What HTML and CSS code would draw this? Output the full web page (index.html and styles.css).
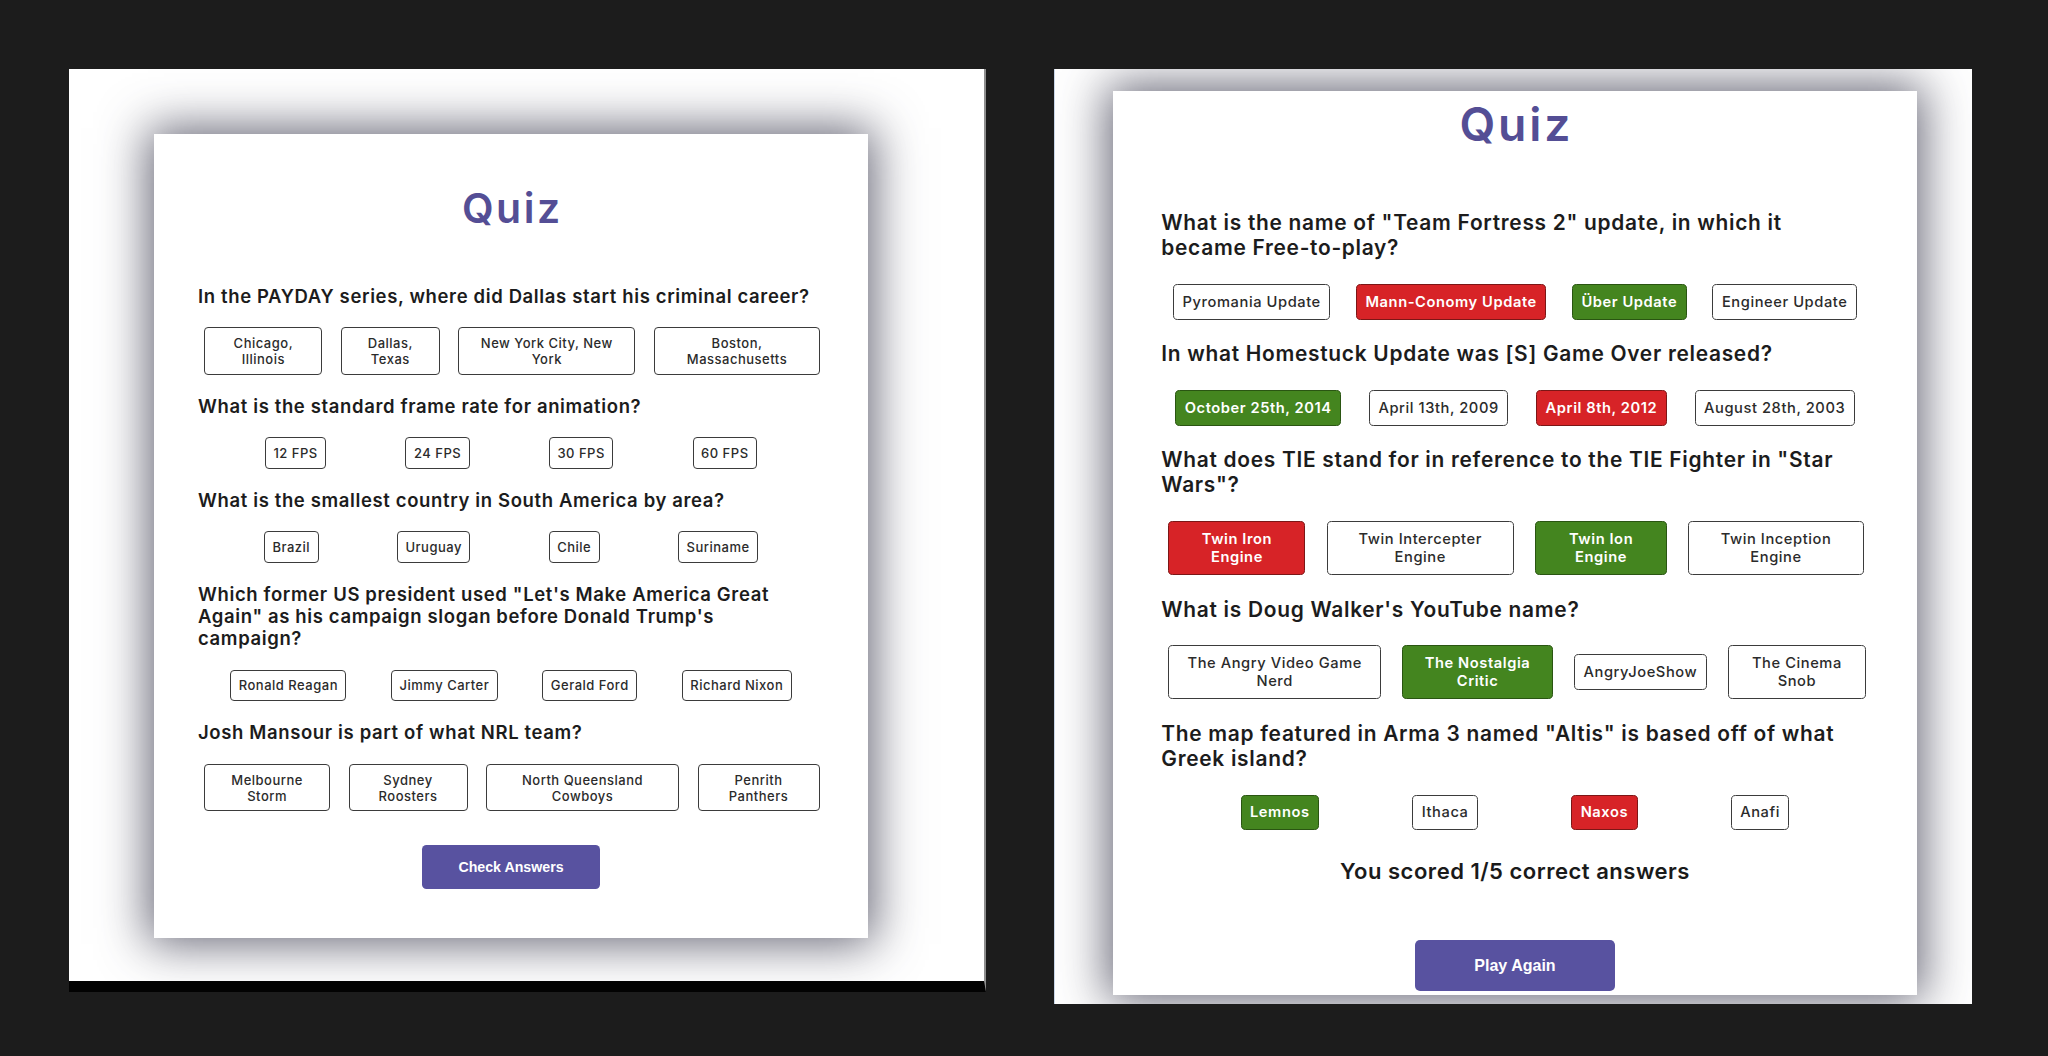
FILE: index.html
```html
<!DOCTYPE html>
<html lang="en">
<head>
<meta charset="utf-8">
<title>Quiz</title>
<link rel="stylesheet" href="styles.css">
</head>
<body>
<div class="stage">
  <section class="shot shot--left">
    <div class="quiz quiz--left">
      <h1 class="quiz__title">Quiz</h1>

      <div class="question">
        <h2 class="question__text">In the PAYDAY series, where did Dallas start his criminal career?</h2>
        <div class="answers answers--payday">
          <button class="answer">Chicago, Illinois</button>
          <button class="answer">Dallas, Texas</button>
          <button class="answer">New York City, New York</button>
          <button class="answer">Boston, Massachusetts</button>
        </div>
      </div>

      <div class="question">
        <h2 class="question__text">What is the standard frame rate for animation?</h2>
        <div class="answers">
          <button class="answer">12 FPS</button>
          <button class="answer">24 FPS</button>
          <button class="answer">30 FPS</button>
          <button class="answer">60 FPS</button>
        </div>
      </div>

      <div class="question">
        <h2 class="question__text">What is the smallest country in South America by area?</h2>
        <div class="answers">
          <button class="answer">Brazil</button>
          <button class="answer">Uruguay</button>
          <button class="answer">Chile</button>
          <button class="answer">Suriname</button>
        </div>
      </div>

      <div class="question">
        <h2 class="question__text">Which former US president used "Let's Make America Great Again" as his campaign slogan before Donald Trump's campaign?</h2>
        <div class="answers">
          <button class="answer">Ronald Reagan</button>
          <button class="answer">Jimmy Carter</button>
          <button class="answer">Gerald Ford</button>
          <button class="answer">Richard Nixon</button>
        </div>
      </div>

      <div class="question">
        <h2 class="question__text">Josh Mansour is part of what NRL team?</h2>
        <div class="answers answers--nrl">
          <button class="answer">Melbourne Storm</button>
          <button class="answer">Sydney Roosters</button>
          <button class="answer">North Queensland Cowboys</button>
          <button class="answer">Penrith Panthers</button>
        </div>
      </div>

      <button class="quiz__action">Check Answers</button>
    </div>
  </section>

  <section class="shot shot--right">
    <div class="quiz quiz--right">
      <h1 class="quiz__title">Quiz</h1>

      <div class="question">
        <h2 class="question__text">What is the name of "Team Fortress 2" update, in which it became Free-to-play?</h2>
        <div class="answers">
          <button class="answer">Pyromania Update</button>
          <button class="answer answer--wrong">Mann-Conomy Update</button>
          <button class="answer answer--correct">Über Update</button>
          <button class="answer">Engineer Update</button>
        </div>
      </div>

      <div class="question">
        <h2 class="question__text">In what Homestuck Update was [S] Game Over released?</h2>
        <div class="answers">
          <button class="answer answer--correct">October 25th, 2014</button>
          <button class="answer">April 13th, 2009</button>
          <button class="answer answer--wrong">April 8th, 2012</button>
          <button class="answer">August 28th, 2003</button>
        </div>
      </div>

      <div class="question">
        <h2 class="question__text">What does TIE stand for in reference to the TIE Fighter in "Star Wars"?</h2>
        <div class="answers answers--tie">
          <button class="answer answer--wrong">Twin Iron Engine</button>
          <button class="answer">Twin Intercepter Engine</button>
          <button class="answer answer--correct">Twin Ion Engine</button>
          <button class="answer">Twin Inception Engine</button>
        </div>
      </div>

      <div class="question">
        <h2 class="question__text">What is Doug Walker's YouTube name?</h2>
        <div class="answers answers--doug">
          <button class="answer">The Angry Video Game Nerd</button>
          <button class="answer answer--correct">The Nostalgia Critic</button>
          <button class="answer">AngryJoeShow</button>
          <button class="answer">The Cinema Snob</button>
        </div>
      </div>

      <div class="question">
        <h2 class="question__text">The map featured in Arma 3 named "Altis" is based off of what Greek island?</h2>
        <div class="answers">
          <button class="answer answer--correct">Lemnos</button>
          <button class="answer">Ithaca</button>
          <button class="answer answer--wrong">Naxos</button>
          <button class="answer">Anafi</button>
        </div>
      </div>

      <p class="quiz__score">You scored 1/5 correct answers</p>
      <button class="quiz__action">Play Again</button>
    </div>
  </section>
</div>
</body>
</html>
```

FILE: styles.css
```css
* {
  box-sizing: border-box;
}

html,
body {
  margin: 0;
}

body {
  width: 2048px;
  height: 1056px;
  overflow: hidden;
  background: #1c1c1c;
  font-family: Inter, "Noto Sans", sans-serif;
}

.stage {
  display: flex;
  align-items: flex-start;
  gap: 68px;
  padding: 69px 0 0 69px;
}

.shot {
  flex: none;
  background: #fff;
  overflow: hidden;
}

.shot--left {
  width: 917px;
  height: 923px;
  padding: 65px 0 0 85px;
  border-right: 2px solid #8e8e8e;
  border-bottom: 11px solid #020202;
}

.shot--right {
  width: 918px;
  height: 935px;
  padding: 22px 0 0 58px;
  border-left: 1px solid #c9d6e8;
}

/* quiz card: all sizes expressed in card units (--u) */
.quiz {
  --u: 1px;
  width: calc(714 * var(--u));
  padding: calc(49.5 * var(--u)) calc(41 * var(--u)) calc(48.4 * var(--u));
  background: #fff;
  box-shadow: 0 0 45px 6px rgba(50, 50, 70, 0.74);
}

.quiz--right {
  --u: 1.13px;
  width: calc(711.5 * var(--u));
  padding: calc(5.3 * var(--u)) calc(39.75 * var(--u)) calc(4.4 * var(--u));
}

.quiz__title {
  margin: 0 0 calc(53.2 * var(--u));
  padding-left: calc(2.5 * var(--u));
  font-size: calc(41 * var(--u));
  line-height: calc(48 * var(--u));
  font-weight: 600;
  letter-spacing: calc(2.5 * var(--u));
  color: #544e95;
  text-align: center;
}

.question__text {
  margin: 0 0 calc(20.4 * var(--u));
  padding: 0 calc(11 * var(--u)) 0 calc(3 * var(--u));
  font-size: calc(18.5 * var(--u));
  line-height: calc(22 * var(--u));
  font-weight: 600;
  letter-spacing: calc(0.63 * var(--u));
  color: #1c1c1c;
}

.answers {
  display: flex;
  justify-content: space-evenly;
  align-items: center;
  margin-bottom: calc(20.2 * var(--u));
}

.answer {
  flex: none;
  margin: 0 calc(9.35 * var(--u));
  padding: calc(6.8 * var(--u)) calc(7.5 * var(--u));
  border: 1px solid #3b3b3b;
  border-radius: calc(4 * var(--u));
  background: #fff;
  font-family: Inter, "Noto Sans", sans-serif;
  font-size: calc(13 * var(--u));
  line-height: calc(16 * var(--u));
  font-weight: 500;
  letter-spacing: calc(0.5 * var(--u));
  color: #2b2b2b;
  text-align: center;
}

.answer--correct {
  background: #44851f;
  border-color: #2a5512;
  color: #fff;
  font-weight: 600;
}

.answer--wrong {
  background: #d72327;
  border-color: #7c1616;
  color: #fff;
  font-weight: 600;
}

/* rows whose answers wrap onto two lines */
.answers--payday .answer,
.answers--nrl .answer,
.answers--tie .answer,
.answers--doug .answer {
  padding-left: calc(10 * var(--u));
  padding-right: calc(10 * var(--u));
}

.answers--payday .answer:nth-child(1) { width: calc(118 * var(--u)); }
.answers--payday .answer:nth-child(2) { width: calc(98.6 * var(--u)); }
.answers--payday .answer:nth-child(3) { width: calc(177 * var(--u)); }
.answers--payday .answer:nth-child(4) { width: calc(166 * var(--u)); }

.answers--nrl .answer:nth-child(1) { width: calc(125.5 * var(--u)); }
.answers--nrl .answer:nth-child(2) { width: calc(119 * var(--u)); }
.answers--nrl .answer:nth-child(3) { width: calc(192.6 * var(--u)); }
.answers--nrl .answer:nth-child(4) { width: calc(122 * var(--u)); }

.answers--tie .answer:nth-child(1) { width: calc(121.2 * var(--u)); }
.answers--tie .answer:nth-child(2) { width: calc(165.9 * var(--u)); }
.answers--tie .answer:nth-child(3) { width: calc(116.8 * var(--u)); }
.answers--tie .answer:nth-child(4) { width: calc(155.4 * var(--u)); }

.answers--doug .answer:nth-child(1) { width: calc(188.1 * var(--u)); }
.answers--doug .answer:nth-child(2) { width: calc(133.5 * var(--u)); }
.answers--doug .answer:nth-child(3) {
  padding-left: calc(7.5 * var(--u));
  padding-right: calc(7.5 * var(--u));
}
.answers--doug .answer:nth-child(4) { width: calc(122.3 * var(--u)); }

/* margins below the last answer row collapse with these, so they are the full gap */
.quiz__score {
  margin: calc(22.7 * var(--u)) 0 0;
  font-size: calc(19.5 * var(--u));
  line-height: calc(28 * var(--u));
  font-weight: 600;
  letter-spacing: calc(0.45 * var(--u));
  color: #1a1a1a;
  text-align: center;
}

.quiz__action {
  display: block;
  width: calc(177.5 * var(--u));
  height: calc(44.5 * var(--u));
  margin: calc(33.4 * var(--u)) auto 0;
  border: none;
  border-radius: calc(4.5 * var(--u));
  background: #5852a0;
  color: #fff;
  font-family: "Liberation Sans", Arial, sans-serif;
  font-size: calc(14.2 * var(--u));
  font-weight: 700;
}

.quiz__score + .quiz__action {
  margin-top: calc(46.9 * var(--u));
}
```
